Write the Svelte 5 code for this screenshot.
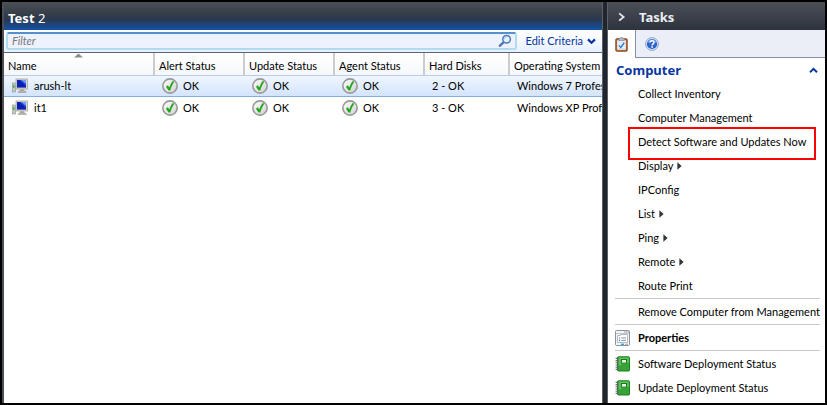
<script>
  const columns = [
    { key: 'name', label: 'Name' },
    { key: 'alert', label: 'Alert Status' },
    { key: 'update', label: 'Update Status' },
    { key: 'agent', label: 'Agent Status' },
    { key: 'disks', label: 'Hard Disks' },
    { key: 'os', label: 'Operating System' }
  ];
  const computers = [
    { name: 'arush-lt', disks: '2 - OK', os: 'Windows 7 Professional' },
    { name: 'it1', disks: '3 - OK', os: 'Windows XP Professional' }
  ];
  const tasks = [
    { label: 'Collect Inventory' },
    { label: 'Computer Management' },
    { label: 'Detect Software and Updates Now', marked: true },
    { label: 'Display', menu: true },
    { label: 'IPConfig' },
    { label: 'List', menu: true },
    { label: 'Ping', menu: true },
    { label: 'Remote', menu: true },
    { label: 'Route Print' }
  ];
  const reports = ['Software Deployment Status', 'Update Deployment Status'];
  let filter = $state('');
  let selected = $state(0);
</script>

{#snippet okIcon()}
  <svg width="16" height="16" viewBox="0 0 17 17" aria-hidden="true">
    <defs>
      <linearGradient id="disc" x1="0" y1="0" x2="1" y2="1">
        <stop offset="0" stop-color="#ffffff" /><stop offset="1" stop-color="#cfcfcf" />
      </linearGradient>
    </defs>
    <circle cx="8.5" cy="8.5" r="7.6" fill="url(#disc)" stroke="#989898" stroke-width="1.7" />
    <path d="M4.2 9.2 L6.2 7.8 L7.8 10 C8.8 7.2 10 5 11.4 3.2 L13 4 C11.2 6.6 9.8 9.6 8.8 13.2 L7 13.2 Z" fill="#23a51c" />
  </svg>
{/snippet}

<div class="app">
  <main class="computers">
    <h1 class="bar"><b>Test</b>&nbsp;2</h1>
    <div class="filterbar">
      <div class="search">
        <input type="text" aria-label="Filter" placeholder="Filter" bind:value={filter} />
        <button class="find" aria-label="Search">
          <svg width="14" height="14" viewBox="0 0 14 14">
            <path d="M1.8 11.8 L5.4 8.4" stroke="#5277b4" stroke-width="2.4" stroke-linecap="round" />
            <circle cx="8.6" cy="5.2" r="3.8" fill="#e9f3ff" stroke="#4d7cbd" stroke-width="1.5" />
            <path d="M6.4 5.2 A2.3 2.3 0 0 1 8.6 3" fill="none" stroke="#a9c9ee" />
          </svg>
        </button>
      </div>
      <button class="criteria">
        Edit Criteria
        <svg width="9" height="7" viewBox="0 0 9 7" aria-hidden="true"><path d="M1 1.4 L4.5 4.8 L8 1.4" fill="none" stroke="#0836a0" stroke-width="2.2" /></svg>
      </button>
    </div>
    <div class="grid">
      <table>
        <colgroup>
          <col class="c-name" /><col class="c-status" /><col class="c-status" /><col class="c-status" /><col class="c-disks" /><col />
        </colgroup>
        <thead>
          <tr>
            {#each columns as col}
              <th scope="col" aria-sort={col.key === 'name' ? 'ascending' : undefined}>
                {col.label}
                {#if col.key === 'name'}
                  <svg class="sort" width="9" height="5" viewBox="0 0 9 5" aria-hidden="true"><path d="M0 4.6 L4.5 0.4 L9 4.6 Z" fill="#8b8b8b" /></svg>
                {/if}
              </th>
            {/each}
          </tr>
        </thead>
        <tbody>
          {#each computers as pc, i}
            <tr class:selected={i === selected} onclick={() => (selected = i)}>
              <td>
                <span class="cell">
                  <svg width="18" height="16" viewBox="-1 0 18 16" aria-hidden="true">
                    <rect x="0.5" y="5" width="3" height="9" fill="#c4c8c4" stroke="#8d918d" stroke-width="0.6" />
                    <rect x="1" y="7" width="1.5" height="3" fill="#46b746" />
                    <rect x="4" y="1" width="11.4" height="10" fill="#d6d4cc" stroke="#a8a69c" stroke-width="0.8" />
                    <rect x="5" y="2" width="9" height="7.6" fill="#0c1fb4" />
                    <path d="M8.6 2 H14 V6 Z" fill="#6d9cf4" />
                    <path d="M8.6 2 L14 6 V8 L7.4 2 Z" fill="#2747d8" />
                    <rect x="8" y="11" width="4" height="2" fill="#b5b3ab" />
                    <path d="M6 14.4 L7.4 12.8 H12.8 L14.4 14.4 Z" fill="#c4c2ba" stroke="#8f8d86" stroke-width="0.6" />
                  </svg>
                  {pc.name}
                </span>
              </td>
              {#each ['alert', 'update', 'agent'] as status (status)}
                <td><span class="cell">{@render okIcon()}OK</span></td>
              {/each}
              <td><span class="cell">{pc.disks}</span></td>
              <td><span class="cell">{pc.os}</span></td>
            </tr>
          {/each}
        </tbody>
      </table>
    </div>
  </main>
  <div class="splitter"></div>
  <aside class="tasks">
    <header class="bar">
      <button class="collapse" aria-label="Collapse tasks">
        <svg width="8" height="10" viewBox="0 0 8 10"><path d="M1.2 1.4 L5.6 5 L1.2 8.6" fill="none" stroke="#e4e6ea" stroke-width="1.8" /></svg>
      </button>
      <h2>Tasks</h2>
    </header>
    <div class="tabs" role="tablist">
      <button class="tab active" role="tab" aria-selected="true" aria-label="Tasks">
        <svg width="13" height="15" viewBox="0 0 13 15">
          <rect x="0.8" y="1.8" width="11.4" height="12.4" rx="0.8" fill="#b0683a" stroke="#8b4a24" />
          <rect x="2.2" y="3.2" width="8.6" height="9.6" fill="#f3f8ff" />
          <path d="M3.8 3.6 V1.6 H5.2 L5.6 0.4 H7.4 L7.8 1.6 H9.2 V3.6 Z" fill="#b9bec6" stroke="#767b83" stroke-width="0.6" />
          <path d="M3.2 5.4 H9.8 M3.2 7.4 H9.8 M3.2 9.4 H9.8 M3.2 11.4 H9.8" stroke="#c4d4ea" stroke-width="0.7" />
          <path d="M4 8.4 L5.8 10.6 L9.2 5.6" fill="none" stroke="#2c7fd0" stroke-width="1.5" />
        </svg>
      </button>
      <button class="tab" role="tab" aria-selected="false" aria-label="Help">
        <svg width="14" height="14" viewBox="0 0 14 14">
          <circle cx="7" cy="7" r="6.4" fill="#dbe7f8" stroke="#88a4d0" />
          <circle cx="7" cy="7" r="5.1" fill="#2c63cc" />
          <path d="M2.4 6 A4.7 4.7 0 0 1 11.6 6 Q7 3.6 2.4 6 Z" fill="#6d9ae6" />
          <path d="M5 5.6 C5 3.2 9 3.2 9 5.4 C9 6.8 7.1 6.9 7.1 8.5" fill="none" stroke="#fff" stroke-width="1.5" />
          <rect x="6.3" y="9.3" width="1.6" height="1.5" fill="#fff" />
        </svg>
      </button>
    </div>
    <section>
      <button class="group" aria-expanded="true">
        Computer
        <svg width="9" height="7" viewBox="0 0 9 7" aria-hidden="true"><path d="M1 5.2 L4.5 1.8 L8 5.2" fill="none" stroke="#0836a0" stroke-width="2" /></svg>
      </button>
      <ul>
        {#each tasks as task}
          <li>
            <button class="task" class:marked={task.marked}>
              {task.label}
              {#if task.menu}
                <svg width="5" height="8" viewBox="0 0 5 8" aria-hidden="true"><path d="M0.4 0.2 L4.6 4 L0.4 7.8 Z" fill="#333" /></svg>
              {/if}
            </button>
          </li>
        {/each}
      </ul>
      <hr />
      <button class="task">Remove Computer from Management</button>
      <hr />
      <button class="task iconic strong">
        <svg width="15" height="16" viewBox="0 0 15 16" aria-hidden="true">
          <rect x="0.5" y="0.5" width="14" height="15" rx="1" fill="#f2f4f6" stroke="#8a9299" />
          <path d="M1 3.5 H14" stroke="#c0c6cb" />
          <path d="M9.4 2 H10.4 M11.2 2 H12.2 M12.8 2 H13.6" stroke="#5f666c" />
          <path d="M2.5 5.5 H5.5 V4.5 H12.5 V12.5 H2.5 Z" fill="#fff" stroke="#b3bac0" />
          <path d="M4 8 H5.2 M4 10.4 H5.2" stroke="#3f79b8" stroke-width="1.2" />
          <path d="M6.4 8 H11 M6.4 10.4 H11" stroke="#8b949b" />
          <path d="M6 14.3 H9" stroke="#27b0ee" stroke-width="1.4" /><path d="M10 14.3 H13" stroke="#aab2b8" stroke-width="1.2" />
        </svg>
        Properties
      </button>
      <hr />
      {#each reports as report}
        <button class="task iconic">
          <svg width="15" height="16" viewBox="0 0 15 16" aria-hidden="true">
            <rect x="2.5" y="0.8" width="12" height="14.2" rx="0.8" fill="#35a335" stroke="#1f7d22" />
            <path d="M3.4 1.6 H13.8 V7 Q8 7 3.4 10 Z" fill="#5cc158" />
            <rect x="6.5" y="3.5" width="5" height="3.6" fill="#e9f8e4" stroke="#1e7a22" />
            <path d="M0.6 2.4 H4 M0.6 4.6 H4 M0.6 6.8 H4 M0.6 9 H4 M0.6 11.2 H4 M0.6 13.4 H4" stroke="#667066" stroke-width="1.1" />
          </svg>
          {report}
        </button>
      {/each}
    </section>
  </aside>
</div>

<style>
  .app {
    box-sizing: border-box;
    display: flex;
    min-height: 100vh;
    border: 2px solid #000;
    background: #fff;
    color: #000;
    font: 11px/16px Lato, "Noto Sans", sans-serif;
  }
  button {
    padding: 0;
    border: 0;
    background: none;
    color: inherit;
    font: inherit;
    text-align: left;
    cursor: pointer;
  }
  svg { flex: none; display: block; }
  .computers {
    flex: 1;
    min-width: 0;
    border-left: 2px solid #4b4f58;
  }
  .bar {
    box-sizing: border-box;
    display: flex;
    align-items: center;
    height: 28px;
    margin: 0;
    color: #fff;
    font: 400 13px/18px "Noto Sans", sans-serif;
  }
  h1.bar {
    padding: 3px 4px 0;
    background: linear-gradient(#4c5058 0%, #373e49 40%, #2a3850 62%, #1d4478 80%, #1452a4 100%);
  }
  .filterbar {
    display: flex;
    align-items: center;
    gap: 9px;
    box-sizing: border-box;
    height: 23px;
    padding: 0 6px 0 2px;
    background: linear-gradient(#fff, #e8f1ff);
    border-bottom: 1px solid #5a6474;
  }
  .search {
    flex: 1;
    display: flex;
    align-items: center;
    box-sizing: border-box;
    height: 18px;
    min-width: 0;
    padding: 0 3px 0 4px;
    border: 2px solid #b0dcee;
    border-top-color: #5590cc;
    border-radius: 3px;
    background: #eef2ff;
  }
  input {
    flex: 1;
    min-width: 0;
    padding: 0;
    border: 0;
    outline: 0;
    background: none;
    color: #000;
    font: inherit;
  }
  input::placeholder { color: #777; font-style: italic; opacity: 1; }
  .criteria {
    display: flex;
    align-items: center;
    gap: 4px;
    color: #0836a0;
    white-space: nowrap;
  }
  .grid { overflow: hidden; }
  table {
    width: 100%;
    border-collapse: separate;
    border-spacing: 0;
    table-layout: fixed;
  }
  .c-name { width: 151px; }
  .c-status { width: 90px; }
  .c-disks { width: 85px; }
  th {
    position: relative;
    box-sizing: border-box;
    height: 22px;
    padding: 3px 0 0 4px;
    border-right: 2px solid #ccc;
    background: linear-gradient(#fff, #f7f8fc);
    font-weight: 400;
    text-align: left;
    white-space: nowrap;
  }
  th:last-child { border-right: 0; }
  .sort { position: absolute; top: 0; left: calc(50% - 5px); }
  td {
    box-sizing: border-box;
    height: 22px;
    padding: 0 0 0 7px;
    border-top: 1px solid transparent;
    border-bottom: 1px solid transparent;
    overflow: hidden;
    white-space: nowrap;
  }
  .selected td {
    border-top-color: #b5cdee;
    border-bottom-color: #86addc;
    background: linear-gradient(#f0f6ff, #d3e4fc);
  }
  .cell { display: flex; align-items: center; gap: 5px; }
  .splitter {
    width: 6px;
    box-sizing: border-box;
    border: solid #59626c;
    border-width: 0 1px;
    background: #20262c;
  }
  .tasks { flex: 0 0 217px; min-width: 0; }
  .tasks .bar {
    gap: 13px;
    padding: 2px 0 0 10px;
    background: linear-gradient(#4c5058, #2c333d);
  }
  h2 { margin: 0; color: #eceef2; font-size: 13px; font-weight: 700; }
  .tabs {
    display: flex;
    height: 28px;
    background: #eceef7;
  }
  .tab {
    box-sizing: border-box;
    display: flex;
    align-items: center;
    justify-content: center;
    width: 32px;
    border-bottom: 1px solid #8690a2;
  }
  .tab.active {
    width: 28px;
    border-right: 1px solid #8690a2;
    border-bottom: 0;
    background: #fff;
  }
  .tabs::after { content: ""; flex: 1; border-bottom: 1px solid #8690a2; }
  .group {
    display: flex;
    align-items: center;
    justify-content: space-between;
    width: 100%;
    height: 24px;
    padding: 0 7px 0 8px;
    color: #0836a0;
    font: 700 13px/18px "Noto Sans", sans-serif;
  }
  ul { margin: 0; padding: 0; list-style: none; }
  .task {
    position: relative;
    display: flex;
    align-items: center;
    gap: 4px;
    width: 100%;
    height: 24px;
    padding-left: 30px;
    white-space: nowrap;
  }
  .marked::after {
    content: "";
    position: absolute;
    inset: -3px 9px -6px 20px;
    border: 2px solid #f00;
  }
  .iconic { gap: 8px; padding-left: 7px; }
  .strong { font-weight: 700; }
  hr { height: 1px; margin: 0 5px 1px 7px; border: 0; background: #c8c8c8; }
</style>
